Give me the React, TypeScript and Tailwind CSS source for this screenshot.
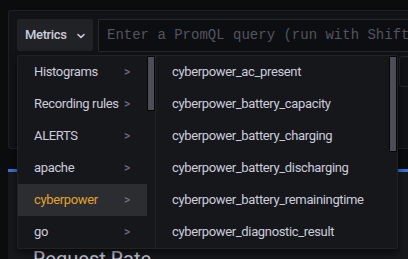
import React from 'react';

// Left column of the metrics cascader
const groups = ["Histograms", "Recording rules", "ALERTS", "apache", "cyberpower", "go"];

// Metric names shown for the active group
const metrics = [
  "cyberpower_ac_present",
  "cyberpower_battery_capacity",
  "cyberpower_battery_charging",
  "cyberpower_battery_discharging",
  "cyberpower_battery_remainingtime",
  "cyberpower_diagnostic_result",
];

function Chevron() {
  return (
    <svg width="10" height="10" viewBox="0 0 10 10" className="ml-[9px] mt-[2px]">
      <path d="M2 3.5 L5 6.5 L8 3.5" fill="none" stroke="#ccccdc" strokeWidth="1.6" strokeLinecap="round" strokeLinejoin="round" />
    </svg>
  );
}

function Cascader() {
  return (
    <div className="absolute left-[17px] top-[55px] w-[381px] h-[194px] flex bg-[#16171b] border border-[#202226] rounded-[2px] shadow-[0_4px_8px_rgba(0,0,0,0.6)]">
      {/* groups */}
      <div className="flex border-r border-[#22242a]">
        <div className="w-[129px] flex flex-col">
          {groups.map((g) => (
            <div
              key={g}
              className={`h-[32px] flex items-center pl-[16px] text-[13px] tracking-[-0.35px] ${g === "cyberpower" ? "bg-[#2c2d31] text-[#e0a32c]" : "text-[#ccccdc]"}`}
            >
              <span className="flex-1 whitespace-nowrap">{g}</span>
              <span className="mr-[17px] text-[12px] text-[#7b7e88]">&gt;</span>
            </div>
          ))}
        </div>
        <div className="w-[8px]">
          <div className="w-[8px] h-[55px] bg-[#4c4d57] border border-[#060608]" />
        </div>
      </div>
      {/* metrics */}
      <div className="flex flex-1">
        <div className="flex-1 flex flex-col">
          {metrics.map((m) => (
            <div key={m} className="h-[32px] flex items-center pl-[16px] text-[13px] tracking-[-0.35px] text-[#ccccdc] whitespace-nowrap">
              {m}
            </div>
          ))}
        </div>
        <div className="w-[8px]">
          <div className="w-[8px] h-[96px] bg-[#4c4d57] border border-[#060608]" />
        </div>
      </div>
    </div>
  );
}

export default function App() {
  return (
    <div className="relative w-[408px] h-[259px] overflow-hidden bg-[#0b0c0e] font-['Roboto',sans-serif]">
      <div className="pt-[10px] pl-[8px]">
        {/* query editor panel */}
        <div className="h-[139px] bg-[#121317] border border-r-0 border-[#1f2025] rounded-l-[3px] pt-[8px] pl-[8px]">
          <div className="flex gap-[5px]">
            <div className="w-[76px] h-[32px] flex items-center pl-[8px] bg-[#202226] rounded-[2px] text-[13px] tracking-[-0.35px] font-medium text-[#ccccdc]">
              Metrics
              <Chevron />
            </div>
            <div className="flex-1 h-[33px] flex items-center pl-[8px] bg-[#0d0e11] border border-r-0 border-[#26282d] rounded-l-[2px] overflow-hidden">
              <span className="font-['Liberation_Mono',monospace] text-[14px] text-[#52555d] whitespace-nowrap">
                Enter a PromQL query (run with Shift+Enter)
              </span>
            </div>
          </div>
          <div className="flex mt-[4px]">
            <div className="w-[382px] shrink-0" />
            <div className="w-[40px] h-[31px] shrink-0 border border-[#26282d] rounded-[3px]" />
          </div>
        </div>
        {/* next panel */}
        <div className="mt-[20px] h-[120px] border-t-[3px] border-[#3d71d9] bg-[#17181c] pl-[25px] pt-[73px]">
          <div className="text-[20px] leading-[28px] text-[#ccccdc]">Request Rate</div>
        </div>
      </div>
      <Cascader />
    </div>
  );
}
